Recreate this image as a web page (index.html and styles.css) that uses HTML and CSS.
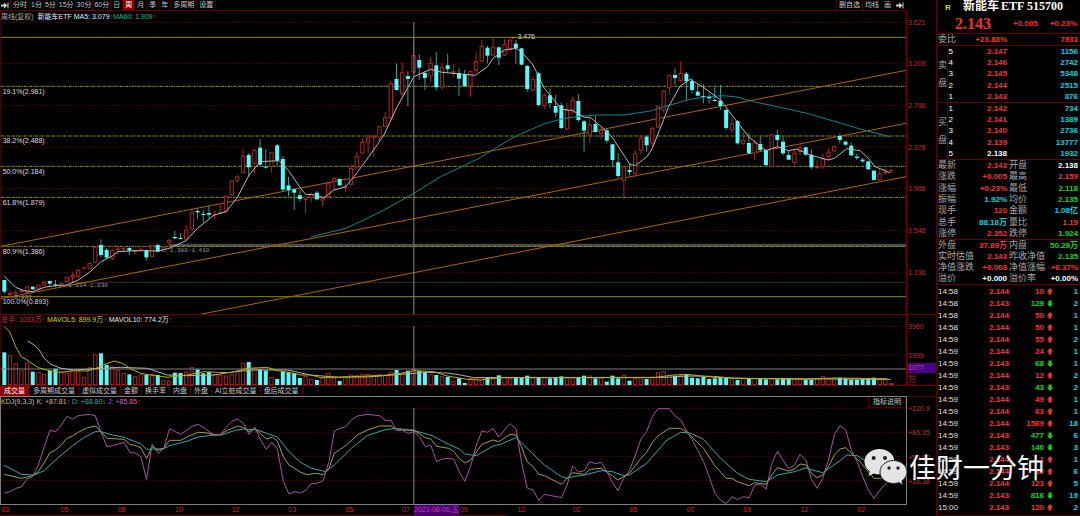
FILE: index.html
```html
<!DOCTYPE html>
<html lang="zh-CN">
<head>
<meta charset="utf-8">
<title>新能车ETF 515700</title>
<link rel="stylesheet" href="styles.css">
</head>
<body>
<div class="terminal">
  <main class="charts">
    <nav class="toolbar">
      <button class="tool tool-tight" aria-label="收起"><svg class="arrow" viewBox="0 0 8 7"><path d="M0 2.500H3V.5L6.500 3.500 3 6.500V4.500H0ZM6.500 .5H7.500V6.500H6.500Z"/></svg></button>
      <button class="tool">分时</button><button class="tool tool-tight">1分</button><button class="tool tool-tight">5分</button><button class="tool tool-tight">15分</button><button class="tool tool-tight">30分</button><button class="tool tool-tight">60分</button><button class="tool">日</button><button class="tool tool-on">周</button><button class="tool">月</button><button class="tool">季</button><button class="tool">年</button><button class="tool">多周期</button><button class="tool">设置</button>
      <span class="spacer"></span>
      <button class="tool tool-right">删自选</button><button class="tool tool-right">均线</button><button class="tool tool-right">画</button><button class="tool tool-right" aria-label="展开"><svg class="arrow" viewBox="0 0 8 7"><path d="M0 2.500H3V.5L6.500 3.500 3 6.500V4.500H0ZM6.500 .5H7.500V6.500H6.500Z"/></svg></button>
    </nav>
    <div class="corner"></div>

    <section class="plot price">
      <svg id="price" class="canvas" viewBox="0 33 2718 909" preserveAspectRatio="none"></svg>
      <p class="legend legend-price"><span class="dim">周线(复权)</span>  新能车ETF MA5: 3.079<i class="up">↑</i><span class="teal">MA60: 1.909</span><i class="up">↑</i></p>
      <div id="price-notes"></div>
    </section>
    <div class="axis" id="price-axis"></div>

    <section class="plot volume">
      <svg id="volume" class="canvas" viewBox="0 0 2718 210" preserveAspectRatio="none"></svg>
      <p class="legend"><span class="red">总手: 1033万</span><i class="up">↑</i> <span class="yellow">MAVOL5: 899.9万</span><i class="up">↑</i> MAVOL10: 774.2万<i class="up">↑</i></p>
    </section>
    <div class="axis axis-volume" id="volume-axis"><span class="cursor-value">1077</span><span class="unit">万</span></div>

    <nav class="tabs">
      <button class="tab tab-on">成交量</button><button class="tab">多周期成交量</button><button class="tab">虚拟成交量</button><button class="tab">金额</button><button class="tab">换手率</button><button class="tab">内盘</button><button class="tab">外盘</button><button class="tab">AI立桩成交量</button><button class="tab">盘后成交量</button>
    </nav>
    <div class="corner"></div>

    <section class="plot kdj">
      <svg id="kdj" class="canvas" viewBox="0 246 2718 321" preserveAspectRatio="none"></svg>
      <p class="legend"><span class="khaki">KDJ(9,3,3) K: +87.81</span><i class="up">↑</i> <span class="teal">D: +88.80</span><i class="teal">↓</i> <span class="violet">J: +85.85</span><i class="up">↑</i></p>
      <button class="explain">指标说明</button>
    </section>
    <div class="axis axis-kdj" id="kdj-axis"></div>

    <div class="dates" id="dates"><span class="cursor-date">2021-08-06,五</span></div>
    <div class="corner"></div>
  </main>

  <aside class="quote">
    <header class="head">
      <h1 class="name"><span class="flag">R</span>新能车<span class="code">ETF 515700</span></h1>
      <p class="last"><b class="last-price">2.143</b><b>+0.005</b><b>+0.23%</b></p>
    </header>
    <table class="grid ratio"><tr><th>委比</th><td class="c-price red">+23.88%</td><td class="red">7931</td></tr></table>
    <table class="grid book">
      <tr><th rowspan="5" class="side">卖<br>盘</th><td class="level">5</td><td class="c-price red">2.147</td><td class="cyan">1156</td></tr>
      <tr><td class="level">4</td><td class="c-price red">2.146</td><td class="cyan">2742</td></tr>
      <tr><td class="level">3</td><td class="c-price red">2.145</td><td class="cyan">5348</td></tr>
      <tr><td class="level">2</td><td class="c-price red">2.144</td><td class="cyan">2515</td></tr>
      <tr><td class="level">1</td><td class="c-price red">2.143</td><td class="cyan">876</td></tr>
    </table>
    <table class="grid book">
      <tr><th rowspan="5" class="side">买<br>盘</th><td class="level">1</td><td class="c-price red">2.142</td><td class="cyan">734</td></tr>
      <tr><td class="level">2</td><td class="c-price red">2.141</td><td class="cyan">1389</td></tr>
      <tr><td class="level">3</td><td class="c-price red">2.140</td><td class="cyan">2736</td></tr>
      <tr><td class="level">4</td><td class="c-price red">2.139</td><td class="cyan">13777</td></tr>
      <tr><td class="level">5</td><td class="c-price">2.138</td><td class="cyan">1932</td></tr>
    </table>
    <table class="grid stats stats-main">
      <tr><th>最新</th><td class="red">2.143</td><th>开盘</th><td>2.138</td></tr>
      <tr><th>涨跌</th><td class="red">+0.005</td><th>最高</th><td class="red">2.159</td></tr>
      <tr><th>涨幅</th><td class="red">+0.23%</td><th>最低</th><td class="green">2.118</td></tr>
      <tr><th>振幅</th><td class="cyan">1.92%</td><th>均价</th><td class="green">2.135</td></tr>
      <tr><th>现手</th><td class="red">120</td><th>金额</th><td class="cyan">1.08亿</td></tr>
      <tr><th>总手</th><td class="cyan">88.18万</td><th>量比</th><td class="red">1.19</td></tr>
      <tr><th>涨停</th><td class="red">2.352</td><th>跌停</th><td class="green">1.924</td></tr>
    </table>
    <table class="grid stats stats-more">
      <tr><th>外盘</th><td class="red">37.89万</td><th>内盘</th><td class="green">50.29万</td></tr>
      <tr><th>实时估值</th><td class="red">2.143</td><th>昨收净值</th><td class="green">2.135</td></tr>
      <tr><th>净值涨跌</th><td class="red">+0.008</td><th>净值涨幅</th><td class="red">+0.37%</td></tr>
      <tr><th>溢价</th><td>+0.000</td><th>溢价率</th><td>+0.00%</td></tr>
    </table>
    <div class="ticks"><table class="grid" id="ticks"></table></div>
  </aside>

  <div class="watermark">
    <svg class="wechat" viewBox="0 0 44 38"><g fill="#e4e4e4"><path d="M15.500 1C7 1 .5 6.600.5 13.700c0 4 2 7.400 5.400 9.700L4.600 28l5.100-2.600c1.900.6 3.800.9 5.800.9C23.800 26.300 30.500 20.700 30.500 13.700S23.800 1 15.500 1Z"/><path stroke="#222" d="M29.500 12.500C22 12.500 16 17.600 16 24s6 11.500 13.500 11.500c2 0 3.700-.3 5.400-.9L39 37l-1.100-4.200C41 30.700 43 27.600 43 24c0-6.400-6-11.500-13.500-11.500Z"/></g><g fill="#222"><circle cx="9.700" cy="10" r="2"/><circle cx="21" cy="10" r="2"/><circle cx="25" cy="20" r="1.700"/><circle cx="34" cy="20" r="1.700"/></g></svg>
    <span>佳财一分钟</span>
  </div>
</div>
<script src="chart.js"></script>
</body>
</html>
```

FILE: styles.css
```css
* { box-sizing: border-box; margin: 0; padding: 0; }

body {
  background: #000;
  color: #e8e8e8;
  font: 7px/10px "Liberation Sans", "Noto Sans CJK SC", sans-serif;
}

button {
  background: none;
  border: 0;
  color: inherit;
  font: inherit;
  white-space: nowrap;
}

i { font-style: normal; }

.terminal {
  position: relative;
  display: grid;
  grid-template-columns: minmax(0, 1fr) 144px;
  height: 100vh;
  overflow: hidden;
}

.charts {
  display: grid;
  grid-template-columns: minmax(0, 1fr) 30px;
  grid-template-rows: 11px minmax(0, 304fr) minmax(0, 71fr) 10px minmax(0, 109fr) 11px;
}

/* colours */
.red { color: #d83034; }
.up { color: #f03030; }
.teal { color: #18b4bc; }
.yellow { color: #d8d800; }
.khaki { color: #c4c470; }
.violet { color: #c860d0; }
.dim { color: #a8a8a8; }
.cyan { color: #00d0e0; }
.green { color: #10d818; }

/* toolbar */
.toolbar { display: flex; border-bottom: 1px solid #600000; }
.tool { padding: 0 2px; border-right: 1px solid #400000; color: #c4c4c4; }
.tool-tight { padding: 0 1px; }
.tool-right { border-right: 0; border-left: 1px solid #400000; }
.tool-on { background: #900000; color: #fff; }
.spacer { flex: 1; }
.arrow { display: block; width: 8px; height: 7px; fill: #d0d0d0; }

/* plots */
.plot { position: relative; border-bottom: 1px solid #700000; border-left: 1px solid #400000; }
.canvas { position: absolute; inset: 0; width: 100%; height: 100%; }
.legend { position: absolute; left: 0; top: 0; white-space: pre; }
.legend-price { top: 1px; }
.kdj { border: 1px solid #808080; border-right: 0; }

.note { position: absolute; height: 10px; margin-top: -5px; white-space: pre; color: #dcdcdc; }
.note-range { font-family: "Liberation Mono", monospace; font-size: 6px; color: #989898; }

.axis {
  position: relative;
  border-left: 1px solid #700000;
  border-bottom: 1px solid #700000;
  color: #d02828;
}
.axis-kdj { border-left-color: #808080; border-top: 1px solid #500000; border-bottom: 0; }
.axis-label { position: absolute; left: 1px; height: 10px; margin-top: -5px; }
.cursor-value {
  position: absolute;
  left: 0;
  right: 0;
  top: 68%;
  padding-left: 1px;
  background: #480088;
  color: #d84870;
}
.unit { position: absolute; left: 0; bottom: 0; border: 1px solid #500000; line-height: 8px; }

.tabs { display: flex; }
.tab { padding: 0 3px; border-right: 1px solid #500000; color: #c8c8c8; }
.tab-on { padding: 0 4px; background: #900000; color: #fff; }

.explain {
  position: absolute;
  right: 0;
  top: 0;
  padding: 0 4px;
  border: 1px solid #500000;
  border-top: 0;
  background: #000;
  color: #c8c8c8;
}

.dates {
  position: relative;
  color: #d02828;
  background: linear-gradient(#600000, #600000) left bottom / 56% 1px no-repeat;
}
.date { position: absolute; top: 0; }
.cursor-date { position: absolute; left: 45.7%; top: 0; background: #480088; color: #d83c78; z-index: 1; }

/* quote panel */
.quote {
  display: flex;
  flex-direction: column;
  border-left: 2px solid #500000;
  color: #fff;
  font-size: 8px;
}
.head { height: 33px; }
.name { font: bold 12px/13px "Liberation Serif", "Noto Sans CJK SC", serif; text-align: left; white-space: nowrap; }
.code { padding-left: 2px; }
.flag { display: inline-block; width: 25px; padding-left: 7px; font: bold 8px/12px "Liberation Sans", sans-serif; color: #d0d060; }
.last { display: flex; justify-content: space-between; align-items: center; padding: 0 3px 0 17px; line-height: 20px; color: #f03030; }
.last-price { margin-right: 10px; font: bold 16px/20px "Liberation Serif", serif; }

.grid { width: 100%; border-collapse: collapse; table-layout: fixed; }
.grid th { font-weight: normal; font-size: 9px; line-height: 11px; color: #a8a8a8; text-align: left; white-space: nowrap; }
.grid td { font-weight: bold; line-height: 11px; text-align: right; white-space: nowrap; }
.grid td:last-child { padding-right: 2px; }
.grid .red { color: #f83434; }

.ratio { height: 12px; border-top: 1px solid #600000; }
.ratio th { width: 20px; }
.ratio .c-price { width: 49px; }
.book { height: 57px; border-top: 1px solid #600000; }
.grid .side { width: 9px; border-right: 1px solid #500000; line-height: 18px; }
.grid .level { width: 10px; text-align: left; padding-left: 1px; font-weight: normal; }
.book .c-price { width: 50px; }
.stats { border-top: 1px solid #600000; }
.stats-main { height: 80px; }
.stats-more { height: 44px; }
.stats th { width: 37px; }
.stats td:nth-child(2) { width: 32px; }
.stats th:nth-child(3) { width: 39px; padding-left: 2px; }

.ticks { flex: 1; min-height: 0; border-top: 1px solid #600000; border-bottom: 1px solid #500000; }
.grid .time { width: 22px; font-weight: normal; text-align: left; color: #e0e0e0; }
.ticks td { height: 12px; }
.grid .deal { width: 49px; }
.grid .size { width: 35px; }
.grid .dir { width: 11px; }
.dir-icon { display: block; width: 6px; height: 7px; margin: 0 auto; }
.dir-up { fill: #f83434; }
.dir-down { fill: #10d818; transform: rotate(180deg); }

/* watermark */
.watermark {
  position: absolute;
  right: 36px;
  bottom: 30px;
  display: flex;
  align-items: center;
  gap: 1px;
  color: #f8f8f8;
  font: 27px/38px "Noto Sans CJK SC", sans-serif;
  pointer-events: none;
}
.wechat { width: 44px; height: 38px; }
```

FILE: chart.js
```js
// Plot units: three per pixel at the base window size.
const PLOT_W = 2718;
const xAt = i => 10 + 17.07 * i;

// Each group: vertical base, then candles as "kind top bottom high low".
const groups = [
  [480, "c 360 395 360 402,r 399 405 392 412,r 397 403 390 412,r 391 396 388 398,r 380 398 378 402,c 380 388 380 390,r 376 388 374 390,r 366 376 363 378,c 363 371 362 378,c 373 377 360 381,r 370 380 366 383,r 352 365 350 367,r 346 352 337 366,r 330 350 328 355,r 323 326 320 328,r 309 326 308 328,r 262 308 260 310,c 255 285 238 292,c 270 293 264 294,r 270 296 266 300,r 266 269 257 283,r 264 267 258 278,c 264 272 259 285,r 271 276 268 284,r 268 271 262 274,c 270 292 268 302,r 256 290 254 292,c 255 275 250 277,r 262 275 258 277,r 240 248 236 262,c 231 235 213 237,c 234 236 220 238,r 210 238 195 242,r 157 208 145 210,c 153 157 145 178,c 162 165 150 188,c 159 164 138 175,r 163 166 152 178,r 157 160 135 162,r 108 155 107 158,r 62 106 60 108,r 50 62 45 68,r -12 38 -33 40,c -15 22 -21 50,r -30 10 -32 40,c -37 14 -63 20,c 20 23 -33 26,r -23 20 -24 38,c -44 2 -48 18,c -3 89 -12 95,c 76 90 50 110,c 88 98 84 150,c 106 117 90 124,r 117 119 108 160,r 102 114 98 127,c 98 118 92 122,r 114 121 108 140,r 70 110 66 112,r 55 66 50 92,c 57 76 54 78,r 80 84 70 97,r 25 74 13 76,r -12 22 -24 28"],
  [0, "r 426 460 415 462,r 413 427 405 458,r 410 413 405 470,r 379 412 377 422,r 352 380 335 382,r 250 354 243 358,c 237 270 190 272,r 217 281 188 295,c 228 237 213 318,r 166 217 126 222,c 180 203 163 240,c 219 234 214 270,r 189 229 172 245,c 196 262 157 272,r 202 262 190 270,c 196 207 162 220,r 214 218 192 232,c 219 236 205 287,c 222 258 210 262,r 214 259 212 290,r 184 211 158 220,r 139 184 120 186,c 143 167 137 190,r 140 166 112 168,c 142 173 140 195,r 133 166 118 168,r 121 148 108 152,c 131 144 120 192,c 145 194 144 196,c 198 267 194 275,r 238 271 230 274,c 220 315 216 320,r 286 317 280 327,c 286 309 266 324,c 318 338 285 352,c 316 384 308 388,r 331 388 308 390,r 300 331 290 342,c 303 360 282 366,c 364 392 360 455,r 373 406 352 430,c 372 396 348 398,r 390 401 380 418,c 391 422 384 430"],
  [390, "c 43 90 42 110,c 97 138 70 143,r 110 152 108 207,c 120 126 100 137,r 70 131 60 143,r 24 62 15 72,c 20 46 16 65"],
  [0, "r 385 430 380 440,r 319 382 317 384,r 273 331 270 338,r 226 264 224 285,c 225 234 205 255,r 219 243 184 245,c 221 244 216 300,c 243 270 234 280,c 275 287 252 289,c 288 290 252 310,c 291 295 280 310,c 300 303 262 305,c 302 318 255 330,c 330 384 326 390,r 370 390 352 398,c 363 430 360 434,r 420 431 395 436,c 429 460 400 462"],
  [390, "r 38 70 30 90,c 42 60 20 64,c 60 105 56 108,r 14 110 12 112,c 15 30 0 50,c 35 70 20 76,c 75 89 62 90,r 69 98 60 104,r 52 65 43 75,c 52 74 50 78,c 74 112 58 118,r 110 114 88 116,r 86 110 72 118,r 66 80 57 90,r 49 64 46 68,c 18 30 10 40,c 35 44 32 48,c 47 76 38 78,c 80 84 70 90,c 89 94 84 98,c 94 118 92 120,c 122 150 120 152,r 131 150 118 155,r 126 129 115 135,r 120 122 118 130"]
];
const candles = groups.flatMap(([base, text]) => text.split(",").map(row => {
  const [kind, ...v] = row.split(" ");
  return [kind, ...v.map(n => Number(n) + base)];
}));

const volumeTops = [112,121,145,167,143,170,172,178,168,161,170,173,165,167,186,157,118,115,150,155,166,174,178,184,178,180,178,180,196,198,173,174,170,157,163,175,171,178,181,182,178,170,144,141,160,163,167,187,192,170,172,174,189,183,192,195,188,175,184,198,185,179,181,177,177,180,178,180,172,165,175,167,162,168,172,178,180,184,186,199,190,204,190,188,186,186,188,181,186,190,186,188,182,186,186,186,190,188,184,188,188,186,182,182,190,188,200,182,190,180,197,190,187,192,186,172,169,180,182,180,177,188,190,186,192,190,186,189,190,195,190,192,190,192,193,190,193,189,190,193,190,194,194,190,184,190,190,188,190,194,194,192,192,188,193,193,205];

const RED = "#b02424", CYAN = "#54fcfc";

const lines = {
  ma5: "10,828 44,862 70,872 95,875 130,862 163,857 198,855 232,840 266,817 300,785 334,768 351,755 402,752 471,753 505,745 556,722 590,685 640,645 676,635 710,592 744,527 778,485 835,482 864,512 900,565 915,583 950,585 968,594 1000,570 1035,560 1060,530 1090,490 1105,470 1150,405 1190,320 1240,230 1290,208 1325,217 1380,222 1425,226 1461,200 1478,175 1512,150 1547,145 1563,155 1598,195 1632,265 1683,327 1717,332 1752,352 1770,352 1805,382 1836,412 1880,480 1888,492 1905,497 1940,470 1956,445 1980,385 2005,320 2040,258 2070,238 2110,262 2161,300 2195,345 2247,412 2298,452 2332,440 2366,452 2390,447 2430,465 2485,480 2503,475 2540,446 2580,452 2605,475 2625,500 2670,518",
  ma60: "930,711 1035,685 1100,655 1150,630 1240,580 1320,530 1430,478 1530,417 1560,402 1630,372 1683,357 1735,349 1790,345 1870,345 1950,333 2010,315 2070,298 2120,290 2170,287 2210,291 2260,305 2340,322 2420,340 2500,363 2590,390 2670,410",
  vol5: "10,35 27,52 44,95 61,125 78,135 112,158 140,166 180,172 220,167 260,168 290,158 315,147 340,138 365,145 390,162 420,175 450,180 500,187 560,180 610,170 650,172 690,173 740,160 800,157 830,167 870,173 900,180 930,180 960,188 1000,188 1080,184 1150,181 1200,175 1240,167 1300,170 1340,183 1400,193 1440,195 1500,188 1960,188 2020,180 2060,178 2150,188 2240,190 2420,193 2500,189 2660,191",
  vol10: "80,78 100,90 115,105 130,130 150,148 180,160 220,165 270,162 300,160 360,157 440,160 500,180 560,182 640,180 700,170 760,165 860,165 930,180 1000,186 1100,186 1200,178 1280,172 1340,174 1380,180 1420,188 1500,188 2000,187 2060,183 2140,184 2200,190 2672,193",
  j: "10,534 27,530 44,520 61,516 78,492 95,485 112,450 130,395 147,346 164,350 181,330 198,304 215,313 232,302 265,298 283,302 300,350 318,395 335,392 370,382 387,412 404,415 420,425 437,493 454,387 472,415 489,400 506,341 540,358 575,333 592,328 610,338 627,352 645,360 660,358 678,335 695,318 712,312 728,325 745,358 762,337 780,375 797,403 813,382 830,402 848,500 865,537 882,530 900,534 917,525 930,507 952,504 967,497 985,440 1001,348 1018,340 1035,336 1052,315 1070,303 1100,298 1137,302 1155,317 1172,317 1188,347 1205,345 1222,355 1240,350 1257,365 1274,395 1291,391 1308,440 1325,432 1345,430 1360,433 1376,470 1393,499 1410,455 1427,393 1444,348 1461,352 1478,340 1495,366 1512,345 1529,326 1547,342 1563,440 1580,519 1598,525 1615,556 1632,538 1683,548 1700,510 1717,453 1735,471 1752,467 1768,440 1786,446 1803,442 1820,470 1836,502 1853,527 1870,490 1887,468 1905,420 1922,372 1939,350 1956,305 1973,281 2007,281 2024,302 2041,315 2058,345 2075,373 2092,405 2110,440 2127,485 2144,535 2161,555 2178,566 2195,545 2212,554 2229,545 2247,548 2264,510 2281,507 2298,523 2315,445 2332,408 2349,437 2366,461 2383,450 2400,418 2418,437 2434,493 2451,520 2468,490 2485,435 2503,358 2520,332 2537,345 2554,405 2571,440 2588,485 2605,525 2622,550 2640,525 2665,498",
  k: "10,478 61,490 95,482 112,470 130,443 147,413 164,405 181,390 198,370 215,363 232,352 260,338 285,333 300,350 318,370 370,373 387,388 404,392 420,398 437,431 454,395 472,406 489,400 506,376 540,376 560,365 592,352 620,354 640,360 660,358 678,347 712,333 728,338 745,350 762,340 797,372 815,367 830,378 848,425 865,450 882,460 900,472 920,479 945,475 968,479 985,460 1001,415 1035,392 1070,360 1100,345 1137,333 1172,333 1188,345 1240,345 1274,368 1291,372 1308,394 1345,400 1360,410 1376,430 1393,444 1410,435 1427,412 1444,388 1478,375 1495,380 1529,358 1547,360 1563,395 1580,440 1598,455 1615,478 1632,482 1683,508 1700,490 1717,473 1752,478 1768,463 1803,460 1836,482 1853,495 1887,475 1922,430 1939,412 1956,383 1973,363 2007,340 2041,340 2058,350 2110,400 2144,452 2178,490 2195,490 2212,500 2247,512 2264,503 2298,508 2315,480 2332,458 2366,468 2383,462 2400,447 2418,450 2434,475 2451,488 2468,480 2485,455 2503,420 2520,402 2537,398 2560,420 2588,450 2622,490 2640,490 2670,480",
  d: "10,451 61,478 100,480 130,467 147,450 181,420 215,392 250,367 283,350 300,350 335,360 370,367 420,387 437,403 489,401 506,392 560,378 592,366 640,360 662,360 700,347 728,342 770,345 800,356 830,366 865,410 900,442 930,459 975,470 1001,450 1052,400 1100,362 1150,345 1188,340 1240,347 1291,360 1345,388 1376,402 1393,417 1427,422 1478,393 1500,388 1547,368 1580,400 1632,450 1683,485 1700,490 1717,485 1752,480 1803,467 1836,470 1870,482 1887,480 1939,445 2000,375 2041,352 2070,354 2110,373 2161,430 2212,475 2247,493 2298,500 2332,480 2383,470 2415,459 2468,473 2520,437 2540,420 2571,422 2600,440 2640,470 2670,485"
};

const line = (x1, y1, x2, y2, color, width = 3, extra = "") =>
  `<line x1="${x1}" y1="${y1}" x2="${x2}" y2="${y2}" stroke="${color}" stroke-width="${width}" ${extra}/>`;
const level = (y, color, extra = "") =>
  line(0, y, PLOT_W, y, color, 3, 'shape-rendering="crispEdges" ' + extra);
const grid = ys => ys.map(y => level(y, "#480000", 'stroke-dasharray="6 3"')).join("");
const curve = (points, color, width = 3) =>
  `<polyline points="${points}" fill="none" stroke="${color}" stroke-width="${width}"/>`;

function bar(kind, x, top, bottom) {
  const h = Math.max(bottom - top, 3);
  return kind === "c"
    ? `<rect x="${x - 6}" y="${top}" width="12" height="${h}" fill="${CYAN}"/>`
    : `<rect x="${x - 5}" y="${top + 1}" width="10" height="${Math.max(h - 2, 1)}" fill="#000" stroke="${RED}" stroke-width="3"/>`;
}

document.getElementById("price").innerHTML =
  grid([67, 190, 316, 441, 566, 692, 817]) +
  line(505, 736, PLOT_W, 736, "#484848", 9) +
  line(190, 847, PLOT_W, 847, "#303030") +
  [112, 890].map(y => level(y, "#888800")).join("") +
  [259, 408, 499, 592, 739].map(y => level(y, "#a0a000", 'stroke-dasharray="8 3 3 3"')).join("") +
  line(0, 739, PLOT_W, 211, "#b06400") +
  line(0, 896, PLOT_W, 370, "#b06400") +
  line(598, 943, PLOT_W, 530, "#b06400") +
  candles.map(([kind, top, bottom, high, low], i) =>
    line(xAt(i), high, xAt(i), low, kind === "c" ? "#30a0a0" : RED) + bar(kind, xAt(i), top, bottom)).join("") +
  curve(lines.ma60, "#088890") + curve(lines.ma5, "#b8b8b8") +
  line(1240, 66, 1240, 943, "#888888");

document.getElementById("volume").innerHTML =
  grid([34, 121]) +
  volumeTops.map((top, i) => bar(candles[i][0], xAt(i), top, 210)).join("") +
  level(162, "#808080") +
  curve(lines.vol10, "#b0b0b0") + curve(lines.vol5, "#b4b400") +
  line(1240, 33, 1240, 210, "#888888");

document.getElementById("kdj").innerHTML =
  grid([280, 352, 424, 496]) +
  curve(lines.d, "#30a8a8") + curve(lines.k, "#a0a050") + curve(lines.j, "#a850a8") +
  line(1240, 279, 1240, 567, "#888888");

const pct = n => (n * 100).toFixed(2) + "%";

document.getElementById("price-notes").innerHTML = [
  [5, 276, "19.1%(2.981)"], [5, 424, "38.2%(2.488)"], [5, 516, "50.0%(2.184)"],
  [5, 608, "61.8%(1.879)"], [5, 755, "80.9%(1.386)"], [5, 906, "100.0%(0.893)"],
  [1530, 110, "←3.476"],
  [507, 753, "1.380-1.410", "note-range"], [202, 858, "1.034-1.036", "note-range"],
  [28, 894, "←0.893", "note-range"]
].map(([x, y, text, cls = ""]) =>
  `<span class="note ${cls}" style="left:${pct(x / PLOT_W)};top:${pct((y - 33) / 909)}">${text}</span>`).join("");

function axisLabels(id, base, span, rows) {
  document.getElementById(id).insertAdjacentHTML("afterbegin", rows.map(([y, text]) =>
    `<span class="axis-label" style="top:${pct((y - base) / span)}">${text}</span>`).join(""));
}
axisLabels("price-axis", 33, 909, [[69, "3.621"], [192, "3.209"], [318, "2.796"], [443, "2.378"], [568, "1.966"], [694, "1.548"], [819, "1.136"]]);
axisLabels("volume-axis", 0, 210, [[36, "3960"], [123, "1999"]]);
axisLabels("kdj-axis", 246, 321, [[282, "+120.9"], [354, "+86.35"], [426, "+50.90"], [498, "+16.38"]]);

document.getElementById("dates").insertAdjacentHTML("afterbegin", [
  [4, "03"], [182, "05"], [353, "08"], [525, "10"], [695, "12"], [865, "03"], [1036, "05"], [1206, "07"],
  [1380, "09"], [1552, "12"], [1718, "02"], [1888, "05"], [2060, "07"], [2230, "09"], [2402, "12"], [2572, "02"]
].map(([x, text]) => `<span class="date" style="left:${pct(x / PLOT_W)}">${text}</span>`).join(""));

document.getElementById("ticks").innerHTML = [
  ["14:58", "2.144", 10, "up", 1], ["14:58", "2.143", 129, "down", 2], ["14:58", "2.144", 50, "up", 1],
  ["14:58", "2.144", 50, "up", 1], ["14:59", "2.144", 55, "up", 2], ["14:59", "2.144", 24, "up", 1],
  ["14:59", "2.143", 68, "down", 1], ["14:59", "2.144", 12, "up", 2], ["14:59", "2.143", 43, "down", 2],
  ["14:59", "2.144", 49, "up", 1], ["14:59", "2.144", 63, "up", 1], ["14:59", "2.144", 1569, "up", 18],
  ["14:59", "2.143", 477, "down", 6], ["14:59", "2.143", 140, "down", 3], ["14:59", "2.144", 1, "up", 1],
  ["14:59", "2.144", 30, "up", 6], ["14:59", "2.144", 121, "up", 5], ["14:59", "2.143", 816, "down", 19],
  ["15:00", "2.143", 120, "up", 2]
].map(([time, price, size, dir, count]) =>
  `<tr><td class="time">${time}</td><td class="deal red">${price}</td><td class="size ${dir === "up" ? "red" : "green"}">${size}</td>` +
  `<td class="dir"><svg class="dir-icon dir-${dir}" viewBox="0 0 6 7"><path d="M3 0L6 3.500H4.500V6.500H1.500V3.500H0Z"/></svg></td><td class="cyan">${count}</td></tr>`).join("");
```
